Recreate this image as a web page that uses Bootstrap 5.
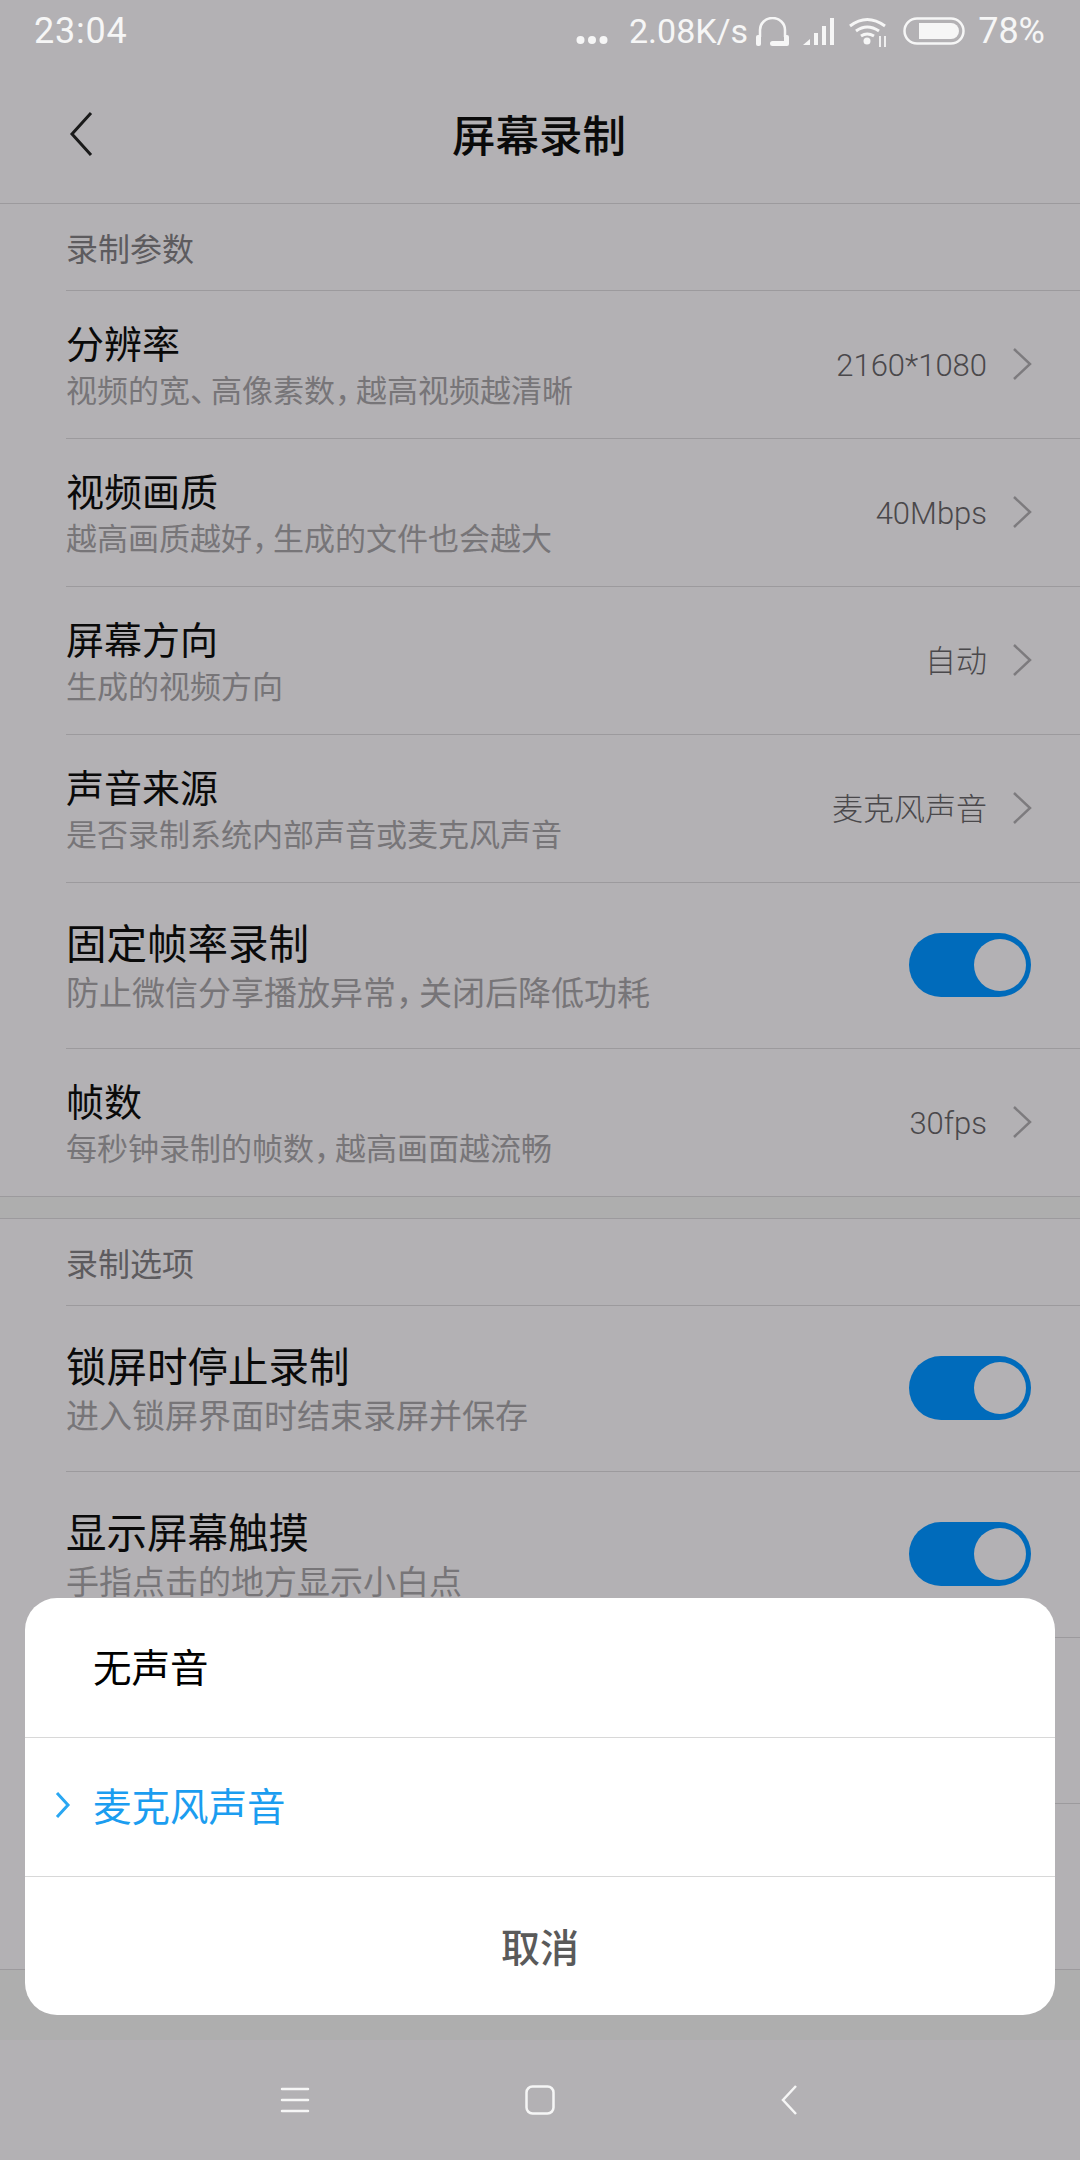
<!DOCTYPE html>
<html lang="zh-CN">
<head>
    <meta charset="UTF-8">
    <meta name="viewport" content="width=device-width, initial-scale=1.0">
    <title>屏幕录制</title>
    <link href="https://cdn.jsdelivr.net/npm/bootstrap@5.3.0/dist/css/bootstrap.min.css" rel="stylesheet">
    <style>
        body {
            font-family: "Noto Sans CJK SC", "Liberation Sans", sans-serif;
            background-color: #b3b1b4;
            margin: 0;
        }

        .phone {
            width: 1080px;
            height: 2160px;
            overflow: hidden;
        }

        .status-bar {
            height: 65px;
            padding: 0 35px 3px 34px;
            color: #f6f6f6;
            font-family: Roboto, sans-serif;
            font-size: 36px;
        }

        .status-time {
            letter-spacing: .8px;
        }

        .status-speed {
            font-size: 34px;
        }

        .sp-13 { margin-left: 13px; }
        .sp-14 { margin-left: 14px; }
        .sp-15 { margin-left: 15px; }
        .sp-16 { margin-left: 16px; }
        .sp-21 { margin-left: 21px; }

        .title-bar {
            height: 139px;
            padding-left: 69px;
            border-bottom: 1px solid #9c9a9d;
        }

        .page-title {
            left: 0;
            right: 2px;
            margin-top: -1px;
            color: #0a0a0a;
            font-size: 43.500px;
            font-weight: 500;
            line-height: 1;
        }

        .group-label {
            margin-left: 66px;
            height: 87px;
            color: #5d5b5e;
            font-size: 32px;
            border-bottom: 1px solid #9c9a9d;
        }

        .set-row {
            margin-left: 66px;
            padding: 0 48px 2px 0;
            height: 148px;
            border-bottom: 1px solid #9c9a9d;
        }

        .set-row.last {
            margin-left: 0;
            padding-left: 66px;
        }

        .row-name {
            color: #0a0a0a;
            font-size: 38px;
            line-height: 50px;
        }

        .row-hint {
            color: #777578;
            font-size: 31px;
            line-height: 44px;
        }

        .set-row.tall {
            height: 166px;
        }

        .tall .row-name {
            font-size: 40.500px;
            line-height: 52px;
        }

        .tall .row-hint {
            font-size: 33px;
            line-height: 46px;
        }

        .tight {
            letter-spacing: -10px;
        }

        .row-value {
            color: #4a484b;
            font-size: 31px;
            font-weight: 300;
            font-family: Roboto, "Noto Sans CJK SC", sans-serif;
            margin: 5px 25px 0 0;
        }

        .toggle-track {
            width: 122px;
            height: 64px;
            margin-right: 1px;
            border-radius: 32px;
            background-color: #006bbb;
            padding: 6px 5px 6px 0;
        }

        .toggle-knob {
            width: 52px;
            height: 52px;
            border-radius: 50%;
            background-color: #b3b1b4;
        }

        .group-gap {
            height: 22px;
            background-color: #aeaeae;
            border-bottom: 1px solid #9c9a9d;
        }

        .fill-gap {
            height: 70px;
            background-color: #aeaeae;
        }

        .nav-keys {
            height: 120px;
            padding-left: 280px;
        }

        .key-home {
            margin-left: 215px;
        }

        .key-back {
            margin-left: 226px;
        }

        .sheet {
            left: 25px;
            top: 1598px;
            width: 1030px;
            height: 417px;
            padding-top: 1px;
            background-color: #fff;
            border-radius: 32px;
            overflow: hidden;
        }

        .sheet-item {
            height: 139px;
            padding: 0 0 4px 68px;
            color: #000;
            font-size: 38.500px;
            border-bottom: 1px solid #d8d8d8;
        }

        .sheet-item.picked {
            color: #1b9df0;
        }

        .sheet-item svg {
            left: 30px;
        }

        .sheet-cancel {
            height: 139px;
            padding-bottom: 3px;
            color: #5a5a5a;
            font-size: 39px;
            font-weight: 500;
        }
    </style>
</head>
<body>
    <div class="phone position-relative">
        <div class="status-bar d-flex justify-content-between align-items-center">
            <span class="status-time">23:04</span>
            <div class="d-flex align-items-center">
                <svg width="32" height="29" viewBox="0 0 32 29" fill="#f6f6f6"><circle cx="4.500" cy="23" r="4"/><circle cx="16" cy="23" r="4"/><circle cx="27.500" cy="23" r="4"/></svg>
                <span class="status-speed sp-21">2.08K/s</span>
                <svg class="ms-2" width="33" height="29" viewBox="0 0 33 29" fill="none" stroke="#f6f6f6" stroke-width="2.500"><path d="M4 20V13a12.500 12 0 0 1 25 0v7"/><rect x="0" y="18" width="5" height="11" rx="2" fill="#f6f6f6" stroke="none"/><rect x="28" y="18" width="5" height="11" rx="2" fill="#f6f6f6" stroke="none"/><rect x="14" y="24" width="17" height="5" rx="2.500" fill="#f6f6f6" stroke="none"/></svg>
                <svg class="sp-14" width="31" height="27" viewBox="0 0 31 27" fill="#f6f6f6"><path d="M0 27l7-6v6z"/><rect x="11" y="15" width="4" height="12"/><rect x="19" y="8" width="4" height="19"/><rect x="27" y="0" width="4" height="27"/></svg>
                <svg class="sp-15" width="38" height="31" viewBox="0 0 38 31" fill="none" stroke="#f6f6f6" stroke-width="3"><path d="M1 10Q18-3 36 10"/><path d="M7 15Q18 7 30 15"/><path d="M12 20Q18 16 25 20"/><circle cx="18" cy="25" r="3.500" fill="#f6f6f6" stroke="none"/><path d="M31 20v11M36 20v11" stroke-width="1.800"/></svg>
                <svg class="sp-16" width="62" height="28" viewBox="0 0 62 28"><rect x="1.500" y="1.500" width="59" height="25" rx="12.500" fill="none" stroke="#f6f6f6" stroke-width="2.500"/><path d="M16 6h32a8 8 0 0 1 0 16H16z" fill="#f6f6f6"/></svg>
                <span class="sp-13">78%</span>
            </div>
        </div>

        <div class="title-bar position-relative d-flex align-items-center">
            <svg width="24" height="44" viewBox="0 0 24 44" fill="none" stroke="#1a1a1a" stroke-width="3"><path d="M22 1L3 22l19 21"/></svg>
            <div class="page-title position-absolute text-center">屏幕录制</div>
        </div>

        <div class="group-label d-flex align-items-center">录制参数</div>

        <div class="set-row d-flex justify-content-between align-items-center">
            <div><div class="row-name">分辨率</div><div class="row-hint">视频的宽<span class="tight">、</span>高像素数<span class="tight">，</span>越高视频越清晰</div></div>
            <div class="d-flex align-items-center"><span class="row-value">2160*1080</span><svg width="20" height="32" viewBox="0 0 20 32" fill="none" stroke="#7d7b7e" stroke-width="2.500"><path d="M2 1l16 15L2 31"/></svg></div>
        </div>
        <div class="set-row d-flex justify-content-between align-items-center">
            <div><div class="row-name">视频画质</div><div class="row-hint">越高画质越好<span class="tight">，</span>生成的文件也会越大</div></div>
            <div class="d-flex align-items-center"><span class="row-value">40Mbps</span><svg width="20" height="32" viewBox="0 0 20 32" fill="none" stroke="#7d7b7e" stroke-width="2.500"><path d="M2 1l16 15L2 31"/></svg></div>
        </div>
        <div class="set-row d-flex justify-content-between align-items-center">
            <div><div class="row-name">屏幕方向</div><div class="row-hint">生成的视频方向</div></div>
            <div class="d-flex align-items-center"><span class="row-value">自动</span><svg width="20" height="32" viewBox="0 0 20 32" fill="none" stroke="#7d7b7e" stroke-width="2.500"><path d="M2 1l16 15L2 31"/></svg></div>
        </div>
        <div class="set-row d-flex justify-content-between align-items-center">
            <div><div class="row-name">声音来源</div><div class="row-hint">是否录制系统内部声音或麦克风声音</div></div>
            <div class="d-flex align-items-center"><span class="row-value">麦克风声音</span><svg width="20" height="32" viewBox="0 0 20 32" fill="none" stroke="#7d7b7e" stroke-width="2.500"><path d="M2 1l16 15L2 31"/></svg></div>
        </div>
        <div class="set-row tall d-flex justify-content-between align-items-center">
            <div><div class="row-name">固定帧率录制</div><div class="row-hint">防止微信分享播放异常<span class="tight">，</span>关闭后降低功耗</div></div>
            <div class="toggle-track d-flex justify-content-end"><div class="toggle-knob"></div></div>
        </div>
        <div class="set-row last d-flex justify-content-between align-items-center">
            <div><div class="row-name">帧数</div><div class="row-hint">每秒钟录制的帧数<span class="tight">，</span>越高画面越流畅</div></div>
            <div class="d-flex align-items-center"><span class="row-value">30fps</span><svg width="20" height="32" viewBox="0 0 20 32" fill="none" stroke="#7d7b7e" stroke-width="2.500"><path d="M2 1l16 15L2 31"/></svg></div>
        </div>

        <div class="group-gap"></div>

        <div class="group-label d-flex align-items-center">录制选项</div>

        <div class="set-row tall d-flex justify-content-between align-items-center">
            <div><div class="row-name">锁屏时停止录制</div><div class="row-hint">进入锁屏界面时结束录屏并保存</div></div>
            <div class="toggle-track d-flex justify-content-end"><div class="toggle-knob"></div></div>
        </div>
        <div class="set-row tall d-flex justify-content-between align-items-center">
            <div><div class="row-name">显示屏幕触摸</div><div class="row-hint">手指点击的地方显示小白点</div></div>
            <div class="toggle-track d-flex justify-content-end"><div class="toggle-knob"></div></div>
        </div>
        <div class="set-row tall"></div>
        <div class="set-row tall last"></div>
        <div class="fill-gap"></div>

        <div class="nav-keys d-flex align-items-center">
            <svg width="30" height="26" viewBox="0 0 30 26" stroke="#f6f6f6" stroke-width="2.500" stroke-linecap="round"><path d="M2 2h26M2 13h26M2 24h26"/></svg>
            <svg class="key-home" width="30" height="30" viewBox="0 0 30 30" fill="none" stroke="#f6f6f6" stroke-width="2.500"><rect x="1.500" y="1.500" width="27" height="27" rx="6"/></svg>
            <svg class="key-back" width="16" height="30" viewBox="0 0 16 30" fill="none" stroke="#f6f6f6" stroke-width="2.500"><path d="M15 1L2 15l13 14"/></svg>
        </div>

        <div class="sheet position-absolute">
            <div class="sheet-item d-flex align-items-center">无声音</div>
            <div class="sheet-item picked position-relative d-flex align-items-center">
                <svg class="position-absolute" width="16" height="26" viewBox="0 0 16 26" fill="none" stroke="#2aa7f2" stroke-width="3"><path d="M2 1l11 12L2 25"/></svg>
                麦克风声音
            </div>
            <div class="sheet-cancel d-flex justify-content-center align-items-center">取消</div>
        </div>
    </div>

    <script src="https://cdn.jsdelivr.net/npm/bootstrap@5.3.0/dist/js/bootstrap.bundle.min.js"></script>
</body>
</html>
